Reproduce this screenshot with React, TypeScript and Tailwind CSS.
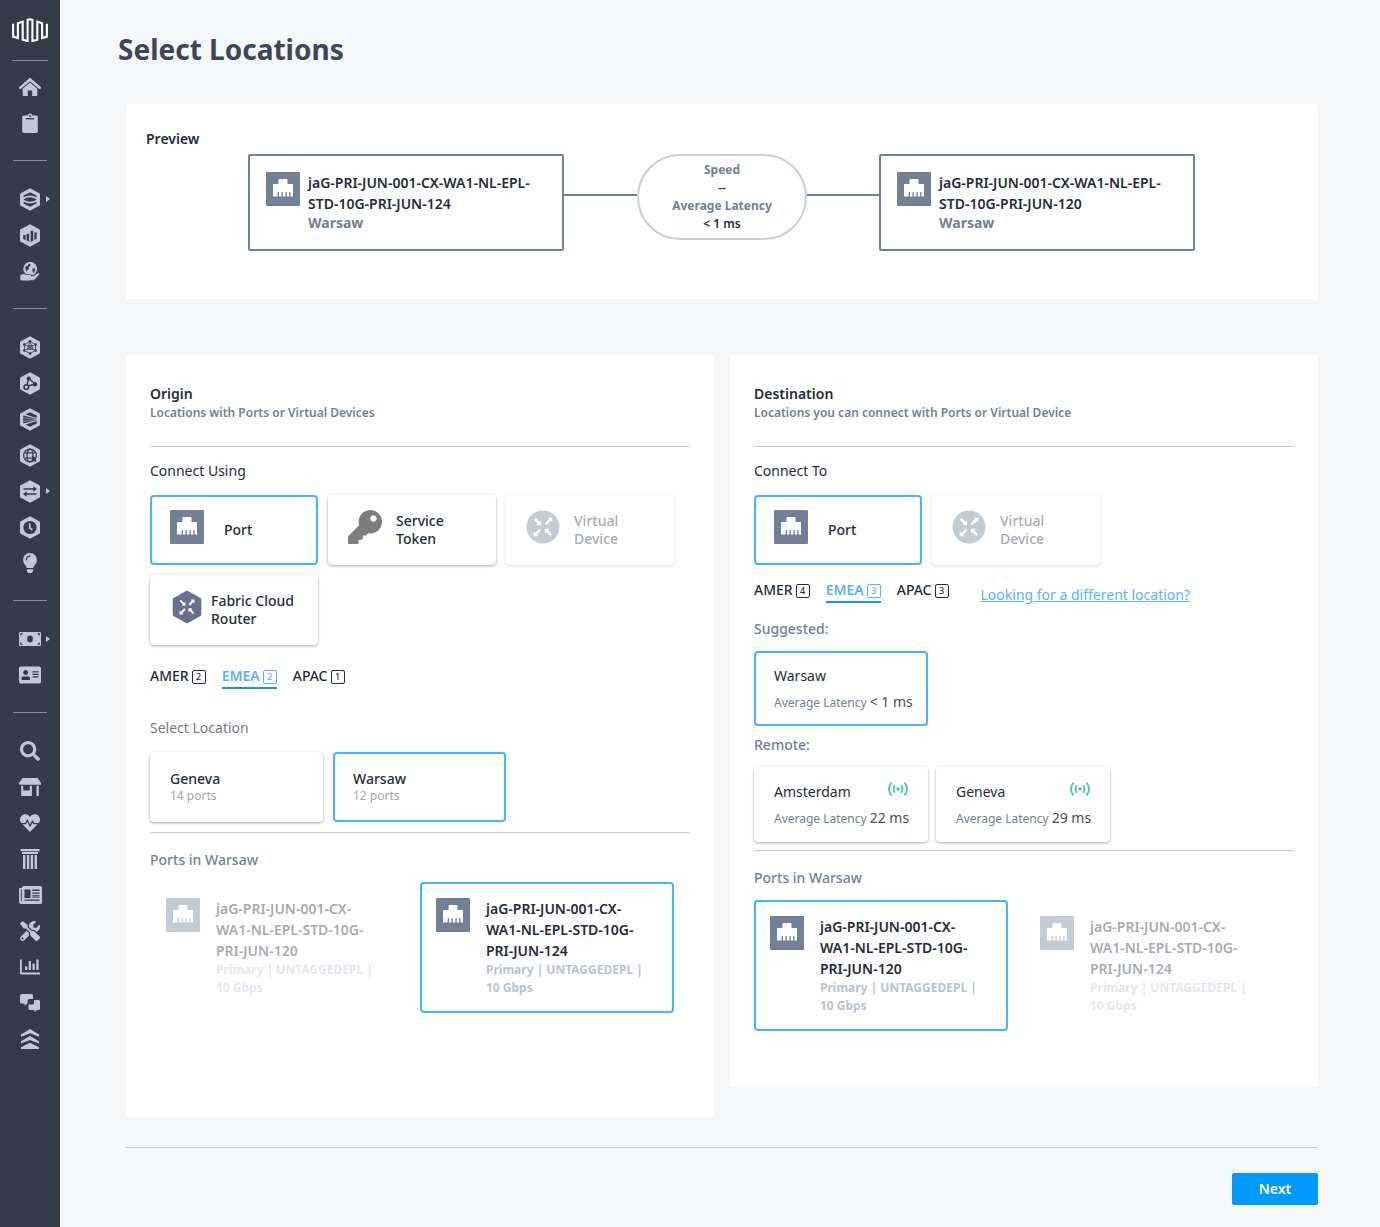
import type { ReactNode } from "react";
import { FaHeartbeat, FaKey, FaLightbulb, FaSearch, FaTools, FaAddressCard } from "react-icons/fa";

/* ---------- sidebar icons ---------- */

const INK = "#363b4b";

function Hex({ children }: { children: ReactNode }) {
  return (
    <svg width="20" height="23" viewBox="0 0 20 23" fill="currentColor">
      <path d="M10 .2 19.2 5.2q.8.5.8 1.4v9.8q0 .9-.8 1.4L10 22.8.8 17.8Q0 17.300 0 16.400V6.600Q0 5.700.8 5.200Z" />
      {children}
    </svg>
  );
}

const LogoIcon = () => (
  <svg width="36" height="24" viewBox="0 0 36 24" fill="none" stroke="#fff" strokeWidth="2.1">
    <path d="M1.100 5.800V18.600L5.900 20V5.200L10.700 3.600V21.800L15.600 23V1.900L18 1.300l2.400.6V23l4.900-1.200V3.600l4.800 1.600V20l4.800-1.400V5.800" />
  </svg>
);

const HomeIcon = () => (
  <svg width="22" height="18" viewBox="0 0 22 18" fill="currentColor">
    <path d="M11 1.500 1.300 9.700" stroke="currentColor" strokeWidth="2.600" strokeLinecap="round" />
    <path d="M11 1.500 20.700 9.700" stroke="currentColor" strokeWidth="2.600" strokeLinecap="round" />
    <path d="M11 4.500 18.300 10.700v6.500q0 .8-.8.8h-4.300v-5.500H8.800V18H4.500q-.8 0-.8-.8V10.700Z" />
  </svg>
);

const ClipboardIcon = () => (
  <svg width="16" height="20" viewBox="0 0 16 20">
    <path fill="currentColor" d="M1.800 2.500h3.700a2.600 2.600 0 0 1 5 0h3.700q1.600 0 1.600 1.600v14.200q0 1.700-1.600 1.700H1.800Q.2 20 .2 18.300V4.100Q.2 2.500 1.800 2.500Z" />
    <circle cx="8" cy="2.900" r="1" fill={INK} />
    <path d="M4 5.700h8" stroke={INK} strokeWidth="1.400" />
  </svg>
);

const LayersIcon = () => (
  <Hex>
    <g fill={INK}>
      <path d="M3.500 7.500 10 4.200l6.500 3.300v1.800Q10 5.900 3.500 9.300Z" />
      <path d="M3.300 11.500q6.700-4.600 13.400 0-6.700 4.600-13.400 0Z" />
      <path d="M3.500 15.500 10 18.800l6.500-3.300v-1.800Q10 17.100 3.500 13.700Z" />
    </g>
  </Hex>
);

const BarsHexIcon = () => (
  <Hex>
    <g fill={INK}>
      <path d="M3.200 11h2.300v5.200l-2.300-1.100ZM6.600 9.800h2.500v8l-2.500-1.200ZM10.700 6.800h2.500v10l-2.500 1.200ZM14.400 8.500h2.300v6.300l-2.300 1.200Z" />
    </g>
  </Hex>
);

const GlobeHandIcon = () => (
  <svg width="20" height="19" viewBox="0 0 20 19">
    <circle cx="10.200" cy="6.800" r="6.300" fill="none" stroke="currentColor" strokeWidth="1.300" />
    <circle cx="10.200" cy="6.800" r="6" fill="currentColor" />
    <path d="M5.300 4.700q2.800-.5 3.300-2.700l2-.3q0 2.600-1.800 3.300.8 2-1.200 3.100L6 9.800ZM12.600 6.600q2-.9 2.800.6-.4 2.600-2 3.700-1.600-1.800-.8-4.300Z" fill={INK} />
    <path d="M0 13q3.500-2.300 6-.5h4q2 .2 1.600 1.700 3-.6 5.700-3 1.600-1 2.700.1-1.800 3.700-6 6.900-5 1.200-14 .5Z" fill="currentColor" stroke={INK} strokeWidth=".7" />
  </svg>
);

const MeshIcon = () => (
  <Hex>
    <g fill="none" stroke={INK} strokeWidth=".8">
      <path d="M10 5.500 15.500 8.500v6L10 17.500 4.500 14.500v-6ZM4.500 8.500 15.500 14.500M15.500 8.500 4.500 14.500M10 5.500 7.500 13.500l5.500 0L10 5.500M7.500 9.500h5.500" />
    </g>
    <g fill={INK}>
      <circle cx="10" cy="5.300" r="1.300" /><circle cx="15.700" cy="8.500" r="1.300" /><circle cx="15.700" cy="14.500" r="1.300" />
      <circle cx="10" cy="17.600" r="1.300" /><circle cx="4.300" cy="14.500" r="1.300" /><circle cx="4.300" cy="8.500" r="1.300" /><circle cx="10" cy="11.500" r="1.100" />
    </g>
  </Hex>
);

const NodesIcon = () => (
  <Hex>
    <g stroke={INK} strokeWidth="1.400" fill="none">
      <path d="M8.800 6.500 15 12M8.800 6.500 6.500 14.500 15 12" />
      <circle cx="6.300" cy="15" r="2.300" fill="#c2c9d6" strokeWidth="1.600" />
    </g>
    <circle cx="8.700" cy="6.600" r="2.100" fill={INK} />
    <circle cx="15" cy="12.200" r="2.200" fill={INK} />
  </Hex>
);

const FanIcon = () => (
  <Hex>
    <g fill={INK}>
      <path d="M5.500 6.500 10 4.200 16.700 7.500V10Z" />
      <path d="M3.200 7.500 16.700 10.700v1.600L3.200 15.500Z" />
      <path d="M5.500 16.500 10 18.800l6.700-3.300V13Z" />
    </g>
    <path d="M3.200 9.800 16.700 11.200M3.200 13.200l13.500-1.400" stroke="#c2c9d6" strokeWidth=".6" />
  </Hex>
);

const GlobeHexIcon = () => (
  <Hex>
    <g fill="none" stroke={INK} strokeWidth="1.200">
      <circle cx="10" cy="11.500" r="6.400" />
      <ellipse cx="10" cy="11.500" rx="3" ry="6.400" />
      <path d="M4.300 8.800h11.400M4.300 14.200h7.500" />
    </g>
    <path d="M11.600 11.700l5.200 2.200-1.900.9 1.700 2.300-1.200.9-1.600-2.300-1.300 1.500Z" fill={INK} />
  </Hex>
);

const SwapIcon = () => (
  <Hex>
    <g fill={INK}>
      <path d="M3.500 8.300h9.800V6.300L17 9l-3.700 2.700V9.700H3.500ZM16.500 13.300H6.700V11.300L3 14l3.700 2.700v-2h9.800Z" />
    </g>
  </Hex>
);

const ClockIcon = () => (
  <Hex>
    <circle cx="10" cy="11.500" r="6.600" fill={INK} />
    <path d="M9.700 7.200v4.600l2.700 2" fill="none" stroke="currentColor" strokeWidth="1.700" />
  </Hex>
);

const MoneyIcon = () => (
  <svg width="22" height="14" viewBox="0 0 22 14">
    <rect width="22" height="14" rx="1" fill="currentColor" />
    <ellipse cx="11" cy="7" rx="2.900" ry="3.400" fill={INK} />
    <path d="M1.500 3.500v-2h2ZM20.500 3.500v-2h-2ZM1.500 10.500v2h2ZM20.500 10.500v2h-2Z" fill={INK} stroke={INK} strokeWidth=".6" />
  </svg>
);

const StoreIcon = () => (
  <svg width="22" height="18" viewBox="0 0 22 18" fill="currentColor">
    <path d="M3.500 0h15L22 5v1.800H0V5Z" />
    <path d="M2.200 7.800h2v4.700h6.600V7.800h2.100V18H2.200ZM17.500 7.800h2.300V18h-2.300Z" />
  </svg>
);

const PillarIcon = () => (
  <svg width="20" height="20" viewBox="0 0 20 20" fill="currentColor">
    <path d="M.5 0h19v2.200H.5ZM2 3h16v2H2ZM3 6h2.400v14H3ZM6.900 6h2.400v14H6.900ZM10.700 6h2.400v14h-2.400ZM14.600 6H17v14h-2.400Z" />
  </svg>
);

const NewsIcon = () => (
  <svg width="23" height="18" viewBox="0 0 23 18">
    <path d="M4.500 0h17q1.500 0 1.500 1.500v15q0 1.500-1.500 1.500h-19Q0 18 0 15.500V3q0-1 1-1h2V1.500Q3 0 4.500 0Z" fill="currentColor" />
    <path d="M2.300 3v12.500" stroke={INK} strokeWidth=".9" />
    <path d="M5.500 3.500h6V12h-6ZM13.300 3.500h7.200v1.400h-7.200ZM13.300 6.500h7.200v1.300h-7.200ZM13.300 9.200h7.200v1.300h-7.200ZM5.500 13.500h15v1.300h-15Z" fill={INK} />
    <path d="M13.300 11.500h7.200" stroke={INK} strokeWidth=".6" />
  </svg>
);

const ChartIcon = () => (
  <svg width="20" height="16" viewBox="0 0 20 16" fill="currentColor">
    <path d="M0 .5h1.800v13H20v2H1.500Q0 15.500 0 14ZM5 7.500h2.300v3.500H5ZM8.700 2h2.300v9H8.700ZM12.500 4.500h2.300V11h-2.300ZM16.300 .5h2.300V11h-2.300Z" />
  </svg>
);

const ChatIcon = () => (
  <svg width="20" height="18" viewBox="0 0 20 18" fill="currentColor">
    <path d="M1.500 0h10Q13 0 13 1.500V5H9.500Q7.500 5 7.500 7v2.500L4.500 11.500V9.500h-3Q0 9.500 0 8V1.500Q0 0 1.500 0Z" />
    <path d="M14 6h4.500Q20 6 20 7.500v7q0 1.500-1.500 1.500H17l-2.500 2v-2H10q-1.500 0-1.500-1.500V10.500H12.500q1.500 0 1.500-1.500Z" />
  </svg>
);

const RanksIcon = () => (
  <svg width="20" height="20" viewBox="0 0 20 20" fill="currentColor">
    <path d="M1 5.500 10 0l9 5.500v2.300l-9-3.600-9 3.600ZM1 12.200 10 7l9 5.200v2.200l-9-3.400-9 3.400ZM1 18.200 10 13.800l9 4.400V20H1Z" />
  </svg>
);

type NavItem = { label: string; icon: ReactNode; sub?: boolean };

const NAV: NavItem[][] = [
  [
    { label: "Home", icon: <HomeIcon /> },
    { label: "Orders", icon: <ClipboardIcon /> },
  ],
  [
    { label: "Data centers", icon: <LayersIcon />, sub: true },
    { label: "Metrics", icon: <BarsHexIcon /> },
    { label: "Global services", icon: <GlobeHandIcon /> },
  ],
  [
    { label: "Fabric", icon: <MeshIcon /> },
    { label: "Network Edge", icon: <NodesIcon /> },
    { label: "Metal", icon: <FanIcon /> },
    { label: "Internet Access", icon: <GlobeHexIcon /> },
    { label: "Exchange", icon: <SwapIcon />, sub: true },
    { label: "Precision Time", icon: <ClockIcon /> },
    { label: "Ideas", icon: <FaLightbulb className="h-5 w-auto" /> },
  ],
  [
    { label: "Billing", icon: <MoneyIcon />, sub: true },
    { label: "Contacts", icon: <FaAddressCard className="h-5 w-[22px]" /> },
  ],
  [
    { label: "Search", icon: <FaSearch size={20} /> },
    { label: "Marketplace", icon: <StoreIcon /> },
    { label: "Health", icon: <FaHeartbeat size={20} /> },
    { label: "Governance", icon: <PillarIcon /> },
    { label: "News", icon: <NewsIcon /> },
    { label: "Tools", icon: <FaTools size={20} /> },
    { label: "Reports", icon: <ChartIcon /> },
    { label: "Chat", icon: <ChatIcon /> },
    { label: "Levels", icon: <RanksIcon /> },
  ],
];

function Sidebar() {
  return (
    <nav aria-label="Main" className="flex w-[60px] shrink-0 flex-col items-center bg-[#363b4b] pt-[18px] text-[#c2c9d6]">
      <a href="#home" aria-label="Dashboard">
        <LogoIcon />
      </a>
      <hr className="mt-[18px] mb-2 w-9 border-[#8a8d96]" />
      {NAV.map((group, i) => (
        <div key={i} className="flex w-full flex-col items-center">
          {i > 0 && <hr className="mt-[19px] mb-5 w-[34px] border-[#8a8d96]" />}
          {group.map((item) => (
            <a key={item.label} href="#nav" aria-label={item.label} className="relative flex h-9 w-full items-center justify-center">
              {item.icon}
              {item.sub && (
                <span className="absolute right-[10px] border-y-[3px] border-l-4 border-y-transparent border-l-[#c2c9d6]" />
              )}
            </a>
          ))}
        </div>
      ))}
    </nav>
  );
}

/* ---------- content icons ---------- */

const PortIcon = () => (
  <svg width="34" height="34" viewBox="0 0 34 34" className="shrink-0">
    <rect width="34" height="34" rx="1" fill="#718096" />
    <path d="M7 24.500V12.500q0-.5.5-.5H12.500V8q0-1 1-1h7q1 0 1 1v4h5q.5 0 .5.500v12h-2.500V20h-1.300v4.500h-2.500V20h-1.300v4.500h-2.600V20h-1.300v4.500h-2.500V20h-1.300v4.500Z" fill="#fff" />
  </svg>
);

const CrossArrows = () => (
  <g fill="#fff">
    {[0, 180].map((r) => (
      <g key={r} transform={`rotate(${r})`}>
        <path d="M-9.200-7.600-7.600-9.200-3.400-5-1.900-6.500V-1.700H-6.700L-5.200-3.200Z" />
        <path d="M9.300-9.300V-4.500L7.800-6 3.500-1.700 1.700-3.500 6-7.800 4.500-9.300Z" />
      </g>
    ))}
  </g>
);

const DeviceIcon = () => (
  <svg width="34" height="34" viewBox="-17 -17 34 34" className="shrink-0">
    <circle r="16.500" fill="#718096" />
    <CrossArrows />
  </svg>
);

const RouterIcon = () => (
  <svg width="30" height="34" viewBox="-15 -17 30 34" className="shrink-0">
    <path d="M-1-16q1-.5 2 0l12.400 7q.9.500.9 1.500V7.500q0 1-.9 1.500L1 16q-1 .5-2 0L-13.400 9q-.9-.5-.9-1.500V-7.500q0-1 .9-1.500Z" fill="#65718d" />
    <g transform="scale(.8)"><CrossArrows /></g>
  </svg>
);

const SignalIcon = () => (
  <svg width="20" height="14" viewBox="0 0 20 14" fill="none" stroke="#41c9a2" strokeWidth="1.800" strokeLinecap="round">
    <circle cx="10" cy="7" r="1.800" fill="#41c9a2" stroke="none" />
    <path d="M6.500 4q-1.900 3 0 6M13.500 4q1.900 3 0 6M3 1.200Q-1 7 3 12.800M17 1.200Q21 7 17 12.800" />
  </svg>
);

/* ---------- building blocks ---------- */

const CARD = "rounded-[4px] bg-white text-left";
const SELECTED = "border-2 border-[#47b3ff]";
const RAISED = "border-2 border-transparent shadow-[0_1px_3px_rgba(0,0,0,0.35)]";

function PreviewBox({ name, city }: { name: string; city: string }) {
  return (
    <div className="flex min-h-[97px] w-[316px] gap-2 rounded-[2px] border-2 border-[#718096] p-4">
      <PortIcon />
      <div className="min-w-0">
        <p className="font-semibold leading-[21px]">{name}</p>
        <p className="font-bold leading-[18px] text-[#718096]">{city}</p>
      </div>
    </div>
  );
}

type MethodProps = { label: ReactNode; icon: ReactNode; selected?: boolean; disabled?: boolean; spacing: string };

function Method({ label, icon, selected, disabled, spacing }: MethodProps) {
  return (
    <button
      type="button"
      disabled={disabled}
      aria-pressed={!!selected}
      className={`${CARD} flex h-[70px] w-[168px] items-center font-medium leading-[18px] ${spacing} ${selected ? SELECTED : RAISED} ${disabled ? "opacity-40" : ""}`}
    >
      <span className="-mt-[6px]">{icon}</span>
      <span>{label}</span>
    </button>
  );
}

function Regions({ counts }: { counts: [string, number][] }) {
  return (
    <div role="tablist" aria-label="Region" className="flex gap-4">
      {counts.map(([name, n]) => {
        const on = name === "EMEA";
        return (
          <button
            key={name}
            type="button"
            role="tab"
            aria-selected={on}
            className={`flex h-[23px] items-start gap-[3px] border-b-2 leading-5 ${on ? "border-[#1890ff] font-semibold text-[#57b3fb]" : "border-transparent font-medium"}`}
          >
            {name}
            <span className="mt-1 flex size-[14px] items-center justify-center rounded-[2px] border border-current text-[9px] font-medium leading-3">{n}</span>
          </button>
        );
      })}
    </div>
  );
}

function LocationCard({ name, ports, selected }: { name: string; ports: number; selected?: boolean }) {
  return (
    <button type="button" aria-pressed={!!selected} className={`${CARD} h-[70px] w-[173px] px-[18px] leading-[18px] ${selected ? SELECTED : RAISED}`}>
      <span className="block font-medium">{name}</span>
      <span className="block text-xs leading-4 text-[#a3a6ab]">{ports} ports</span>
    </button>
  );
}

function LatencyCard({ name, latency, selected, remote }: { name: string; latency: string; selected?: boolean; remote?: boolean }) {
  return (
    <button type="button" aria-pressed={!!selected} className={`${CARD} h-[75px] w-[174px] px-[18px] pt-[2px] ${selected ? SELECTED : RAISED}`}>
      <span className="flex items-start justify-between leading-5">
        {name}
        {remote && <SignalIcon />}
      </span>
      <span className="mt-[6px] flex items-baseline gap-[3px] whitespace-nowrap leading-5 text-[#4a4e5a]">
        <span className="text-xs leading-5 text-[#718096]">Average Latency</span>
        {latency}
      </span>
    </button>
  );
}

function PortCard({ name, selected }: { name: string; selected?: boolean }) {
  return (
    <button
      type="button"
      aria-pressed={!!selected}
      className={`${CARD} flex min-h-[131px] w-[254px] items-start gap-4 p-[14px] pr-7 font-semibold ${selected ? SELECTED : "border-2 border-transparent opacity-40"}`}
    >
      <PortIcon />
      <span className="min-w-0">
        <span className="block leading-[21px]">{name}</span>
        <span className="block text-xs font-bold leading-[18px] text-[#bac2cf]">Primary | UNTAGGEDEPL | 10 Gbps</span>
      </span>
    </button>
  );
}

function PanelHead({ title, note }: { title: string; note: string }) {
  return (
    <header className="border-b border-[#c6cad2] pb-6">
      <h2 className="font-semibold leading-5">{title}</h2>
      <p className="text-xs font-semibold leading-[18px] text-[#718096]">{note}</p>
    </header>
  );
}

const PORT_120 = "jaG-PRI-JUN-001-CX-WA1-NL-EPL-STD-10G-PRI-JUN-120";
const PORT_124 = "jaG-PRI-JUN-001-CX-WA1-NL-EPL-STD-10G-PRI-JUN-124";

function Origin() {
  return (
    <section className="min-w-0 flex-1 rounded-[2px] bg-white px-6 pt-[29px] pb-[104px]">
      <PanelHead title="Origin" note="Locations with Ports or Virtual Devices" />
      <h3 className="mt-[14px] leading-5">Connect Using</h3>
      <div className="mt-[14px] flex flex-wrap gap-[10px]">
        <Method selected label="Port" icon={<PortIcon />} spacing="gap-5 pl-[18px]" />
        <Method label={<>Service<br />Token</>} icon={<FaKey size={34} color="#7d7d7d" />} spacing="gap-[14px] pl-[18px]" />
        <Method disabled label={<>Virtual<br />Device</>} icon={<DeviceIcon />} spacing="gap-[14px] pl-[18px]" />
        <Method label="Fabric Cloud Router" icon={<RouterIcon />} spacing="gap-[9px] pl-5" />
      </div>
      <div className="mt-[21px]">
        <Regions counts={[["AMER", 2], ["EMEA", 2], ["APAC", 1]]} />
      </div>
      <h3 className="mt-[29px] leading-5 text-[#777a80]">Select Location</h3>
      <div className="mt-[14px] flex flex-wrap gap-[10px] border-b border-[#c6cad2] pb-[10px]">
        <LocationCard name="Geneva" ports={14} />
        <LocationCard name="Warsaw" ports={12} selected />
      </div>
      <h3 className="mt-[17px] font-medium leading-5 text-[#718096]">Ports in Warsaw</h3>
      <div className="mt-3 flex flex-wrap gap-4">
        <PortCard name={PORT_120} />
        <PortCard name={PORT_124} selected />
      </div>
    </section>
  );
}

function Destination() {
  return (
    <section className="min-w-0 flex-1 rounded-[2px] bg-white px-6 pt-[29px] pb-14">
      <PanelHead title="Destination" note="Locations you can connect with Ports or Virtual Device" />
      <h3 className="mt-[14px] leading-5">Connect To</h3>
      <div className="mt-[14px] flex flex-wrap gap-[10px]">
        <Method selected label="Port" icon={<PortIcon />} spacing="gap-5 pl-[18px]" />
        <Method disabled label={<>Virtual<br />Device</>} icon={<DeviceIcon />} spacing="gap-[14px] pl-[18px]" />
      </div>
      <div className="mt-[15px] flex items-end gap-8">
        <Regions counts={[["AMER", 4], ["EMEA", 3], ["APAC", 3]]} />
        <a href="#locations" className="leading-4 text-[#57b3fb] underline">Looking for a different location?</a>
      </div>
      <h3 className="mt-4 font-medium leading-5 text-[#718096]">Suggested:</h3>
      <div className="mt-3">
        <LatencyCard name="Warsaw" latency="< 1 ms" selected />
      </div>
      <h3 className="mt-[9px] font-medium leading-5 text-[#718096]">Remote:</h3>
      <div className="mt-3 flex flex-wrap gap-2 border-b border-[#c6cad2] pb-2">
        <LatencyCard name="Amsterdam" latency="22 ms" remote />
        <LatencyCard name="Geneva" latency="29 ms" remote />
      </div>
      <h3 className="mt-[17px] font-medium leading-5 text-[#718096]">Ports in Warsaw</h3>
      <div className="mt-3 flex flex-wrap gap-4">
        <PortCard name={PORT_120} selected />
        <PortCard name={PORT_124} />
      </div>
    </section>
  );
}

export default function App() {
  return (
    <div className="flex min-h-screen bg-[#f4f6f8] font-['Noto_Sans',sans-serif] text-sm text-[#262b38]">
      <Sidebar />
      <main className="min-w-0 flex-1 pt-[31px] pr-[62px] pb-[22px] pl-[66px]">
        <h1 className="-ml-2 text-[28px] font-bold leading-9 text-[#40465a]">Select Locations</h1>

        <section className="mt-[37px] rounded-[2px] bg-white px-5 pt-[25px] pb-12">
          <h2 className="font-semibold leading-5">Preview</h2>
          <div className="mt-[5px] flex items-start justify-center pr-px">
            <PreviewBox name={PORT_124} city="Warsaw" />
            <div className="mt-10 h-[2px] w-[73px] bg-[#718096]" />
            <div className="w-[170px] rounded-[43px] border-2 border-[#c9ced8] py-[5px] text-center text-xs font-semibold leading-[18px]">
              <p className="font-bold text-[#718096]">Speed</p>
              <p>--</p>
              <p className="font-bold text-[#718096]">Average Latency</p>
              <p>&lt; 1 ms</p>
            </div>
            <div className="mt-10 h-[2px] w-[72px] bg-[#718096]" />
            <PreviewBox name={PORT_120} city="Warsaw" />
          </div>
        </section>

        <div className="mt-14 flex items-start gap-4">
          <Origin />
          <Destination />
        </div>

        <footer className="mt-[30px] flex justify-end border-t border-[#c9ccd2] pt-[25px]">
          <button type="button" className="h-8 w-[86px] rounded-[2px] bg-[#0099ff] font-semibold text-white">Next</button>
        </footer>
      </main>
    </div>
  );
}
